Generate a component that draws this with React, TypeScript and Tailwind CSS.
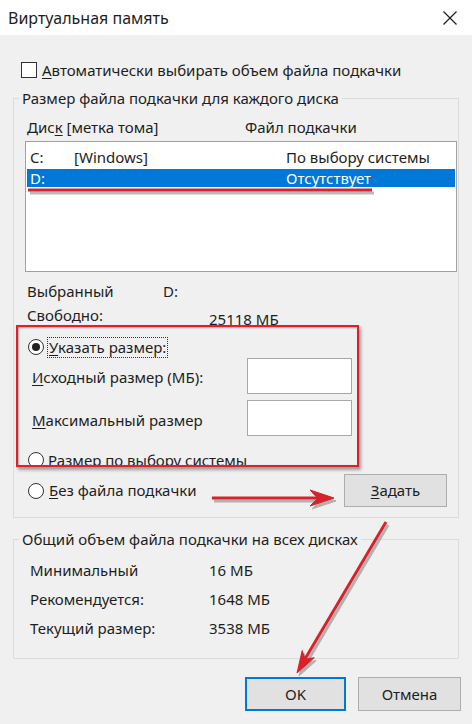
import React from "react";

const font = { fontFamily: '"Noto Sans", "Open Sans", Arial, sans-serif' };

function Radio({ checked }: { checked?: boolean }) {
  return (
    <span className="flex h-[16px] w-[16px] shrink-0 items-center justify-center rounded-full border border-[#333] bg-white">
      {checked && <span className="h-[8px] w-[8px] rounded-full bg-[#222]" />}
    </span>
  );
}

function GroupLabel({ children }: { children: React.ReactNode }) {
  return (
    <div className="-mt-[11px] ml-[5px] w-fit bg-[#f0f0f0] px-[3px] leading-[20px]">{children}</div>
  );
}

function Arrows() {
  return (
    <svg className="pointer-events-none absolute inset-0" width="472" height="724" viewBox="0 0 472 724">
      <g opacity="0.45" transform="translate(2 3)" fill="#666" stroke="#666">
        <line x1="28" y1="190" x2="372" y2="190" strokeWidth="3" />
        <line x1="212" y1="498" x2="318" y2="498" strokeWidth="3" />
        <polygon points="334,498 310,490 318,498 310,506" />
        <line x1="386" y1="522" x2="305" y2="659" strokeWidth="3" />
        <polygon points="297,673 314.2,657.7 305.1,659.2 302.2,650.5" />
      </g>
      <g fill="#d8222a" stroke="#d8222a">
        <line x1="28" y1="190" x2="372" y2="190" strokeWidth="3" />
        <line x1="212" y1="498" x2="318" y2="498" strokeWidth="3" />
        <polygon points="334,498 310,490 318,498 310,506" />
        <line x1="386" y1="522" x2="305" y2="659" strokeWidth="3" />
        <polygon points="297,673 314.2,657.7 305.1,659.2 302.2,650.5" />
      </g>
    </svg>
  );
}

export default function App() {
  return (
    <div className="relative h-[724px] w-[472px] overflow-hidden bg-[#f0f0f0] text-[15px] text-[#1e1e1e]" style={font}>
      {/* title bar */}
      <div className="flex h-[35px] items-center justify-between bg-white pl-[8px] pr-[15px]">
        <span className="text-[16px]">Виртуальная память</span>
        <svg width="14" height="14" viewBox="0 0 14 14" stroke="#222" strokeWidth="1.2">
          <line x1="0.5" y1="0.5" x2="13.5" y2="13.5" />
          <line x1="13.5" y1="0.5" x2="0.5" y2="13.5" />
        </svg>
      </div>

      <div className="mt-[27px] flex h-[16px] items-center pl-[21px]">
        <span className="h-[16px] w-[16px] shrink-0 border border-[#333] bg-white" />
        <span className="ml-[5px] leading-[20px]">
          <u className="underline-offset-2">А</u>втоматически выбирать объем файла подкачки
        </span>
      </div>

      {/* per-disk group */}
      <div className="ml-[13px] mt-[20px] h-[420px] w-[446px] border border-[#dcdcdc]">
        <GroupLabel>Размер файла подкачки для каждого диска</GroupLabel>
        <div className="mt-[9px] flex leading-[20px]">
          <span className="w-[231px] pl-[13px]">
            Дис<u className="underline-offset-2">к</u> [метка тома]
          </span>
          <span>Файл подкачки</span>
        </div>
        <div className="ml-[11px] mr-px mt-[4px] h-[131px] border border-[#a0a0a0] bg-white px-px pt-[6px]">
          <div className="flex h-[21px] items-start pl-[3px] leading-[18px]">
            <span className="w-[44px]">C:</span>
            <span className="w-[212px]">[Windows]</span>
            <span>По выбору системы</span>
          </div>
          <div className="flex h-[18px] items-center bg-[#0078d7] pl-[3px] leading-[18px] text-white">
            <span className="w-[256px]">D:</span>
            <span>Отсутствует</span>
          </div>
        </div>

        <div className="mt-[9px] flex leading-[20px]">
          <span className="w-[149px] pl-[13px]">Выбранный</span>
          <span>D:</span>
        </div>
        <div className="mt-[4px] flex h-[20px] leading-[20px]">
          <span className="w-[195px] pl-[13px]">Свободно:</span>
          <span className="pt-[4px]">25118 МБ</span>
        </div>

        {/* annotated radio block */}
        <div className="ml-[2px] h-[142px] w-[343px] overflow-hidden border-2 border-[#dd2029] shadow-[2px_3px_3px_rgba(0,0,0,0.35),inset_1px_1px_2px_rgba(0,0,0,0.3)]">
          <div className="mt-[9px] flex h-[22px] items-center pl-[10px]">
            <Radio checked />
            <span className="ml-[3px] border border-dotted border-[#333] px-px leading-[19px]">
              <u className="underline-offset-2">У</u>казать размер:
            </span>
          </div>
          <div className="flex h-[36px] items-center justify-between pl-[14px] pr-[5px]">
            <span className="pt-[3px]">
              <u className="underline-offset-2">И</u>сходный размер (МБ):
            </span>
            <span className="h-[36px] w-[105px] border border-[#a8a8a8] bg-white" />
          </div>
          <div className="mt-[6px] flex h-[36px] items-center justify-between pl-[14px] pr-[5px]">
            <span className="pt-[5px]">
              <u className="underline-offset-2">М</u>аксимальный размер
            </span>
            <span className="h-[36px] w-[105px] border border-[#a8a8a8] bg-white" />
          </div>
          <div className="mt-[13px] flex h-[22px] items-center pl-[10px]">
            <Radio />
            <span className="ml-[4px]">Размер по выбору системы</span>
          </div>
        </div>

        <div className="mt-[7px] flex h-[33px] items-center justify-between pl-[14px] pr-[11px]">
          <div className="flex items-center">
            <Radio />
            <span className="ml-[5px]">
              <u className="underline-offset-2">Б</u>ез файла подкачки
            </span>
          </div>
          <button className="h-[33px] w-[103px] border border-[#adadad] bg-[#e1e1e1]">
            <u className="underline-offset-2">З</u>адать
          </button>
        </div>
      </div>

      {/* totals group */}
      <div className="ml-[13px] mt-[21px] h-[120px] w-[446px] border border-[#dcdcdc]">
        <GroupLabel>Общий объем файла подкачки на всех дисках</GroupLabel>
        <div className="mt-[7px]">
          {[
            ["Минимальный", "16 МБ"],
            ["Рекомендуется:", "1648 МБ"],
            ["Текущий размер:", "3538 МБ"],
          ].map(([k, v]) => (
            <div key={k} className="flex h-[29px] items-center">
              <span className="w-[195px] pl-[16px]">{k}</span>
              <span>{v}</span>
            </div>
          ))}
        </div>
      </div>

      <div className="mt-[18px] flex justify-end gap-[12px] pr-[11px]">
        <button className="h-[34px] w-[101px] border-2 border-[#0078d7] bg-[#e1e1e1]">OK</button>
        <button className="h-[34px] w-[103px] border border-[#adadad] bg-[#e1e1e1]">Отмена</button>
      </div>

      <Arrows />
    </div>
  );
}
